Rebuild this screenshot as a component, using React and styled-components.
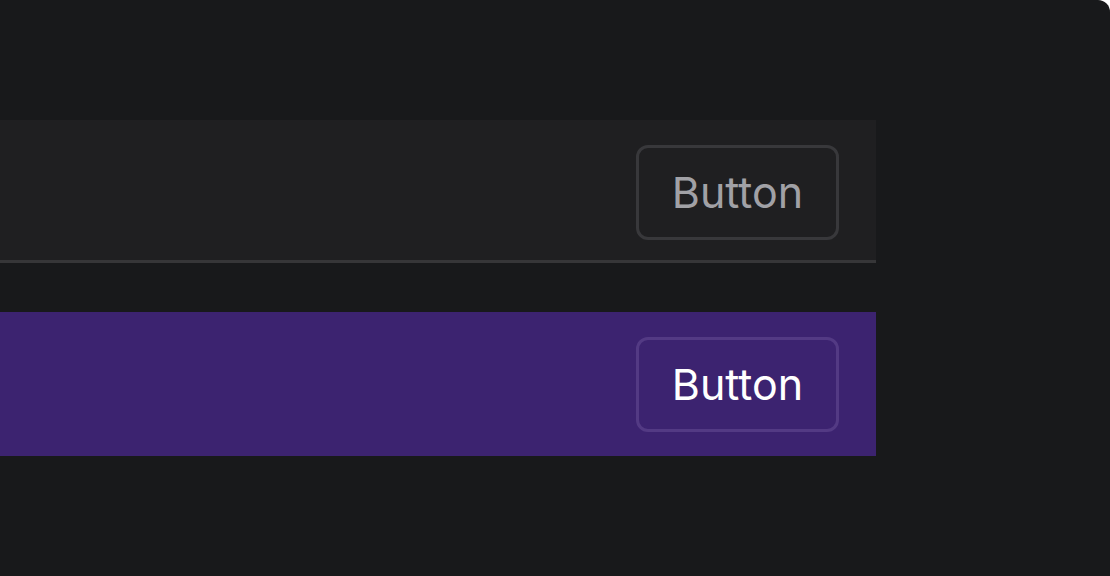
import React from "react";
import styled, { createGlobalStyle } from "styled-components";

const Global = createGlobalStyle`
  html, body { margin: 0; padding: 0; background: #ffffff; }
  body { font-family: Inter, "Noto Sans", sans-serif; }
`;

const Panel = styled.div`
  width: 1110px;
  height: 576px;
  box-sizing: border-box;
  background: #18191b;
  border-top-right-radius: 12px;
  padding-top: 120px;
  display: flex;
  flex-direction: column;
  gap: 49px;
`;

const Row = styled.div`
  width: 876px;
  box-sizing: border-box;
  display: flex;
  align-items: center;
  justify-content: flex-end;
  padding-right: 37px;
  height: ${(p) => (p.$purple ? "144px" : "143px")};
  background: ${(p) => (p.$purple ? "#3c2370" : "#1f1f21")};
  border-bottom: ${(p) => (p.$purple ? "none" : "3px solid #363638")};
`;

const Button = styled.button`
  width: 203px;
  height: 95px;
  box-sizing: border-box;
  border-radius: 12px;
  border: 3px solid ${(p) => (p.$purple ? "#533a84" : "#38383b")};
  background: transparent;
  color: ${(p) => (p.$purple ? "#ffffff" : "#a1a1a6")};
  font-family: Inter, "Noto Sans", sans-serif;
  font-size: 43px;
  font-weight: 400;
  display: flex;
  align-items: center;
  justify-content: center;
  padding: 0;
  margin-top: ${(p) => (p.$purple ? "0" : "4px")};
`;

export default function App() {
  return (
    <>
      <Global />
      <Panel>
        <Row>
          <Button>Button</Button>
        </Row>
        <Row $purple>
          <Button $purple>Button</Button>
        </Row>
      </Panel>
    </>
  );
}
